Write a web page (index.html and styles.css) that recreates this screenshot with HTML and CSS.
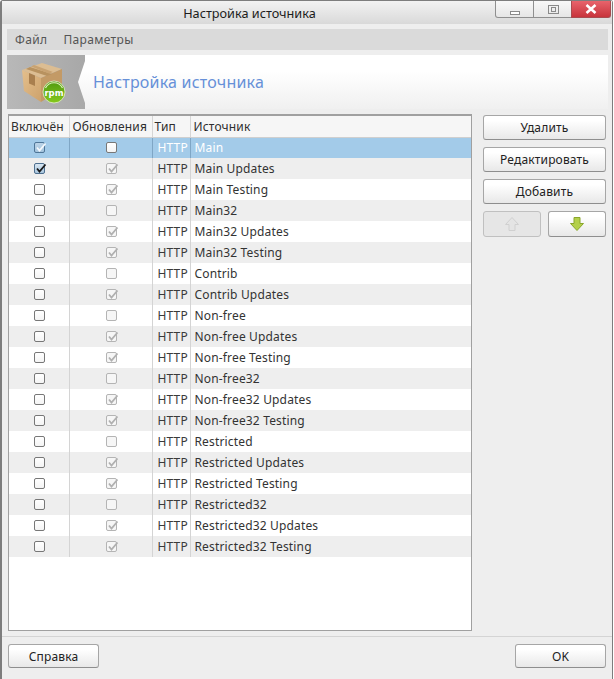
FILE: index.html
```html
<!DOCTYPE html>
<html lang="ru">
<head>
<meta charset="utf-8">
<title>Настройка источника</title>
<link rel="stylesheet" href="styles.css">
</head>
<body>
<svg class="defs" width="0" height="0" aria-hidden="true">
  <symbol id="tick" viewBox="0 0 13 13"><path d="M3 6.5 L5.5 9.5 L11.5 2.5" fill="none" stroke="currentColor" stroke-width="1.8"/></symbol>
</svg>
<div class="window">
  <header class="titlebar">
    <span class="title">Настройка источника</span>
    <div class="wm">
      <span class="wm-btn wm-min"><svg width="12" height="17" viewBox="0 0 12 17"><rect x="1.500" y="10.500" width="9" height="3" fill="#fff" stroke="#8a8a8a"/></svg></span>
      <span class="wm-btn"><svg width="12" height="12" viewBox="0 0 12 12"><rect x="1.500" y="2.500" width="10" height="8" fill="none" stroke="#8a8a8a"/><rect x="4.500" y="4.500" width="4" height="4" fill="none" stroke="#8a8a8a"/></svg></span>
      <span class="wm-btn wm-close"><svg width="12" height="10" viewBox="0 0 12 10"><path d="M1.500 1 L10.500 9 M10.500 1 L1.500 9" stroke="#fff" stroke-width="2.600"/></svg></span>
    </div>
  </header>
  <nav class="menubar"><span>Файл</span><span>Параметры</span></nav>
  <section class="banner">
    <svg class="banner-art" width="79" height="54" viewBox="0 0 79 54">
      <defs>
        <linearGradient id="panel" x1="0" y1="0" x2="1" y2="0"><stop offset="0" stop-color="#b8b8b8"/><stop offset="1" stop-color="#a8a8a8"/></linearGradient>
        <linearGradient id="ball" x1="0" y1="0" x2="0" y2="1"><stop offset="0" stop-color="#4f9a10"/><stop offset="1" stop-color="#86c81c"/></linearGradient>
        <linearGradient id="front" x1="0" y1="0" x2="1" y2="1"><stop offset="0" stop-color="#e4bf8c"/><stop offset="1" stop-color="#cda26c"/></linearGradient>
      </defs>
      <path d="M0 0H78V6L71 27L78 48V54H0Z" fill="url(#panel)"/>
      <path d="M15 15 L35 8 L55 14 L34 23Z" fill="#dcbd92"/>
      <path d="M15 15 L34 23 V47 L17 36Z" fill="url(#front)"/>
      <path d="M34 23 L55 14 V34 L34 47Z" fill="#c39a66"/>
      <path d="M23 12 L45 19 L40 21 L19 14Z" fill="#b8925f"/>
      <path d="M27 10 L46 17 L42 18.500 L24 11.500Z" fill="#c8a271"/>
      <path d="M22 18 L28 20.500 V31 L22 28.500Z" fill="#a97f4e"/>
      <circle cx="47" cy="37" r="11" fill="url(#ball)" stroke="#e4efd0" stroke-width=".8"/>
      <path d="M38.500 33 A9.500 9.500 0 0 1 55.500 33" fill="none" stroke="#dff0c0" stroke-width="1.200"/>
      <text x="47" y="41" class="rpm">rpm</text>
    </svg>
    <h1>Настройка источника</h1>
  </section>
  <main class="content">
    <div class="table-box">
      <table>
        <thead>
          <tr><th class="c1">Включён</th><th class="c2">Обновления</th><th class="c3">Тип</th><th class="c4">Источник</th></tr>
        </thead>
        <tbody>
          <tr class="sel"><td class="chk"><i class="cb on-sel"><svg><use href="#tick"/></svg></i></td><td class="chk"><i class="cb"></i></td><td class="t">HTTP</td><td>Main</td></tr>
          <tr><td class="chk"><i class="cb on"><svg><use href="#tick"/></svg></i></td><td class="chk"><i class="cb dis"><svg><use href="#tick"/></svg></i></td><td class="t">HTTP</td><td>Main Updates</td></tr>
          <tr><td class="chk"><i class="cb"></i></td><td class="chk"><i class="cb dis"><svg><use href="#tick"/></svg></i></td><td class="t">HTTP</td><td>Main Testing</td></tr>
          <tr><td class="chk"><i class="cb"></i></td><td class="chk"><i class="cb dis"></i></td><td class="t">HTTP</td><td>Main32</td></tr>
          <tr><td class="chk"><i class="cb"></i></td><td class="chk"><i class="cb dis"><svg><use href="#tick"/></svg></i></td><td class="t">HTTP</td><td>Main32 Updates</td></tr>
          <tr><td class="chk"><i class="cb"></i></td><td class="chk"><i class="cb dis"><svg><use href="#tick"/></svg></i></td><td class="t">HTTP</td><td>Main32 Testing</td></tr>
          <tr><td class="chk"><i class="cb"></i></td><td class="chk"><i class="cb dis"></i></td><td class="t">HTTP</td><td>Contrib</td></tr>
          <tr><td class="chk"><i class="cb"></i></td><td class="chk"><i class="cb dis"><svg><use href="#tick"/></svg></i></td><td class="t">HTTP</td><td>Contrib Updates</td></tr>
          <tr><td class="chk"><i class="cb"></i></td><td class="chk"><i class="cb dis"></i></td><td class="t">HTTP</td><td>Non-free</td></tr>
          <tr><td class="chk"><i class="cb"></i></td><td class="chk"><i class="cb dis"><svg><use href="#tick"/></svg></i></td><td class="t">HTTP</td><td>Non-free Updates</td></tr>
          <tr><td class="chk"><i class="cb"></i></td><td class="chk"><i class="cb dis"><svg><use href="#tick"/></svg></i></td><td class="t">HTTP</td><td>Non-free Testing</td></tr>
          <tr><td class="chk"><i class="cb"></i></td><td class="chk"><i class="cb dis"></i></td><td class="t">HTTP</td><td>Non-free32</td></tr>
          <tr><td class="chk"><i class="cb"></i></td><td class="chk"><i class="cb dis"><svg><use href="#tick"/></svg></i></td><td class="t">HTTP</td><td>Non-free32 Updates</td></tr>
          <tr><td class="chk"><i class="cb"></i></td><td class="chk"><i class="cb dis"><svg><use href="#tick"/></svg></i></td><td class="t">HTTP</td><td>Non-free32 Testing</td></tr>
          <tr><td class="chk"><i class="cb"></i></td><td class="chk"><i class="cb dis"></i></td><td class="t">HTTP</td><td>Restricted</td></tr>
          <tr><td class="chk"><i class="cb"></i></td><td class="chk"><i class="cb dis"><svg><use href="#tick"/></svg></i></td><td class="t">HTTP</td><td>Restricted Updates</td></tr>
          <tr><td class="chk"><i class="cb"></i></td><td class="chk"><i class="cb dis"><svg><use href="#tick"/></svg></i></td><td class="t">HTTP</td><td>Restricted Testing</td></tr>
          <tr><td class="chk"><i class="cb"></i></td><td class="chk"><i class="cb dis"></i></td><td class="t">HTTP</td><td>Restricted32</td></tr>
          <tr><td class="chk"><i class="cb"></i></td><td class="chk"><i class="cb dis"><svg><use href="#tick"/></svg></i></td><td class="t">HTTP</td><td>Restricted32 Updates</td></tr>
          <tr><td class="chk"><i class="cb"></i></td><td class="chk"><i class="cb dis"><svg><use href="#tick"/></svg></i></td><td class="t">HTTP</td><td>Restricted32 Testing</td></tr>
        </tbody>
      </table>
    </div>
    <aside class="side">
      <button class="btn">Удалить</button>
      <button class="btn">Редактировать</button>
      <button class="btn">Добавить</button>
      <div class="arrows">
        <button class="btn arrow" disabled><svg width="16" height="16" viewBox="0 0 16 16"><path d="M8 1.500 L14.500 8.500 H11 V14.500 H5 V8.500 H1.500Z" fill="#e4e4e4" stroke="#d0d0d0"/></svg></button>
        <button class="btn arrow"><svg width="16" height="16" viewBox="0 0 16 16"><path d="M5 1.500 H11 V7.500 H14.500 L8 14.500 L1.500 7.500 H5Z" fill="#b4d04a" stroke="#8aa62c"/></svg></button>
      </div>
    </aside>
  </main>
  <footer class="footer">
    <button class="btn foot">Справка</button>
    <button class="btn foot">OK</button>
  </footer>
</div>
</body>
</html>
```
FILE: styles.css
```css
html, body { margin: 0; padding: 0; background: #fff; }
body { width: 614px; height: 679px; overflow: hidden; font-family: "Noto Sans", "Open Sans", sans-serif; font-size: 12px; letter-spacing: .16px; color: #2e2e2e; }
.defs { position: absolute; }
.window {
  box-sizing: border-box; width: 613px; height: 679px;
  background: #eeeeee; border: solid #7d7d7d; border-width: 1px 1px 0 2px;
  border-radius: 3px 3px 0 0; display: flex; flex-direction: column;
}
.titlebar {
  box-sizing: border-box; height: 23px; flex: none; position: relative; display: flex; justify-content: center; align-items: center;
  padding-right: 115px;
  background: linear-gradient(#f2f2f2, #d9d9d9);
}
.title { font-size: 12.700px; letter-spacing: 0; color: #1c1c1c; }
.wm { position: absolute; top: 0; right: 1px; display: flex; }
.wm-btn {
  box-sizing: border-box; width: 39px; height: 17px; display: flex; align-items: center; justify-content: center;
  background: linear-gradient(#f8f8f8, #e6e6e6); border: 1px solid #8f8f8f; border-top: 0; margin-left: -1px;
}
.wm-min { border-bottom-left-radius: 3px; }
.wm-close { width: 40px; background: linear-gradient(#e8646c, #c8343c); border-color: #a94c50; border-bottom-right-radius: 3px; }
.menubar {
  margin: 5px 4px 0 5px; height: 21px; flex: none; background: #dadada; display: flex; align-items: center;
  padding-left: 8px; gap: 16px; color: #555; font-size: 12px; letter-spacing: .35px;
}
.banner {
  margin: 5px 4px 0 5px; height: 54px; flex: none; display: flex; align-items: center;
  background: linear-gradient(#ffffff 30%, #f0f0f0);
}
.banner-art { flex: none; display: block; }
.rpm { font-family: "DejaVu Sans", sans-serif; font-weight: 700; font-size: 8.500px; letter-spacing: 0; fill: #fff; text-anchor: middle; }
.banner h1 { margin: 0 0 0 7px; font-size: 16px; letter-spacing: .2px; font-weight: 400; color: #6690d8; }
.content { display: flex; margin: 5px 5px 0 6px; gap: 11px; height: 518px; flex: none; }
.table-box { box-sizing: border-box; width: 464px; height: 517px; background: #fff; border: 1px solid #a0a0a0; border-top-width: 2px; }
table { border-collapse: collapse; width: 462px; table-layout: fixed; font-size: 12px; }
th { height: 21px; padding: 0 0 0 2px; font-weight: 400; text-align: left; background: #f6f6f6; color: #2e2e2e; border-right: 1px solid #d6d6d6; border-bottom: 1px solid #cfcfcf; box-sizing: border-box; white-space: nowrap; }
th:last-child { border-right: 0; }
.c1 { width: 60px; }
.c2 { width: 83px; }
.c3 { width: 38px; }
th.c2, th.c4 { padding-left: 3px; }
td { height: 21px; padding: 0 0 0 4px; box-sizing: border-box; border-right: 1px solid #d4d4d4; line-height: 1; white-space: nowrap; color: #333; }
td:last-child { border-right: 0; }
td.t { color: #3a3a3a; padding-left: 5px; }
tbody tr:nth-child(even) { background: #eeeeee; }
tr.sel { background: #a3cbe9; }
tr.sel td { color: #fff; border-right-color: #7fa6c5; }
td.chk { padding: 0 0 0 1px; text-align: center; }
.cb {
  display: inline-block; box-sizing: border-box; width: 11px; height: 11px; border: 1px solid #777; border-radius: 2px;
  background: linear-gradient(#fff, #f4f4f4); vertical-align: middle; position: relative; top: -1px; color: #222;
}
.cb svg { position: absolute; left: -1px; top: -2px; width: 13px; height: 13px; }
.cb.dis { border-color: #b4b4b4; color: #b0b0b0; background: #f6f6f6; }
.cb.on { border-color: #4e6f8f; background: linear-gradient(#d8e6f2, #a9c6de); color: #1a1a1a; }
.cb.on-sel { border-color: #4f7698; background: linear-gradient(#bcd4e8, #a4c4de); color: #f4f8fc; }
.side { flex: none; width: 123px; display: flex; flex-direction: column; gap: 7px; padding-top: 1px; }
.btn {
  box-sizing: border-box; height: 25px; padding: 0; border: 1px solid #a6a6a6; border-bottom-color: #8e8e8e; border-radius: 3px;
  background: linear-gradient(#fff 20%, #e8e8e8); font: inherit; letter-spacing: .16px; color: #222;
  display: flex; align-items: center; justify-content: center;
}
.btn:disabled { background: #e6e6e6; border-color: #c0c0c0; }
.arrows { display: flex; justify-content: space-between; }
.arrow { width: 58px; height: 26px; }
.footer {
  margin: 4px 0 0 0; padding: 7px 6px 0 6px; border-top: 1px solid #d4d4d4; display: flex; justify-content: space-between; align-items: flex-start;
}
.foot { width: 91px; height: 24px; }
```
